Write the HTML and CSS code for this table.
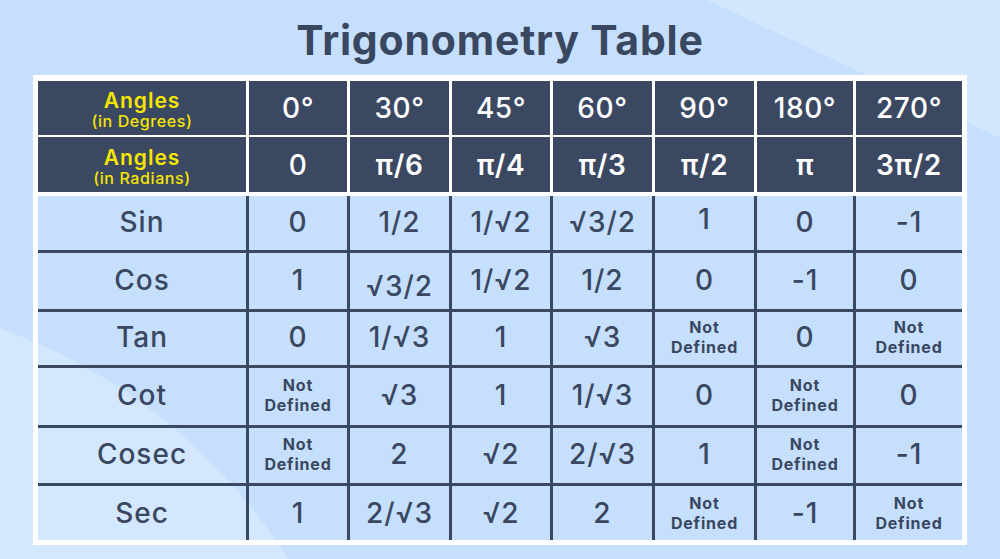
FILE: index.html
```html
<!DOCTYPE html>
<html lang="en">
<head>
<meta charset="utf-8">
<title>Trigonometry Table</title>
<link rel="stylesheet" href="styles.css">
</head>
<body>
<div class="page">
  <h1 class="title">Trigonometry Table</h1>
  <div class="frame">
    <div class="head">
      <div class="hcell label"><span class="big">Angles</span><span class="small">(in Degrees)</span></div>
      <div class="hcell">0°</div>
      <div class="hcell">30°</div>
      <div class="hcell">45°</div>
      <div class="hcell">60°</div>
      <div class="hcell">90°</div>
      <div class="hcell">180°</div>
      <div class="hcell">270°</div>
      <div class="hcell label"><span class="big">Angles</span><span class="small">(in Radians)</span></div>
      <div class="hcell">0</div>
      <div class="hcell pi">π/6</div>
      <div class="hcell pi">π/4</div>
      <div class="hcell pi">π/3</div>
      <div class="hcell pi">π/2</div>
      <div class="hcell pi">π</div>
      <div class="hcell pi">3π/2</div>
    </div>
    <div class="body">
      <div class="cell name">Sin</div>
      <div class="cell">0</div>
      <div class="cell">1/2</div>
      <div class="cell">1/√2</div>
      <div class="cell">√3/2</div>
      <div class="cell up">1</div>
      <div class="cell">0</div>
      <div class="cell">-1</div>

      <div class="cell name">Cos</div>
      <div class="cell">1</div>
      <div class="cell low">√3/2</div>
      <div class="cell">1/√2</div>
      <div class="cell">1/2</div>
      <div class="cell">0</div>
      <div class="cell">-1</div>
      <div class="cell">0</div>

      <div class="cell name">Tan</div>
      <div class="cell">0</div>
      <div class="cell">1/√3</div>
      <div class="cell">1</div>
      <div class="cell">√3</div>
      <div class="cell nd">Not<br>Defined</div>
      <div class="cell">0</div>
      <div class="cell nd">Not<br>Defined</div>

      <div class="cell name">Cot</div>
      <div class="cell nd">Not<br>Defined</div>
      <div class="cell">√3</div>
      <div class="cell">1</div>
      <div class="cell">1/√3</div>
      <div class="cell">0</div>
      <div class="cell nd">Not<br>Defined</div>
      <div class="cell">0</div>

      <div class="cell name">Cosec</div>
      <div class="cell nd">Not<br>Defined</div>
      <div class="cell">2</div>
      <div class="cell">√2</div>
      <div class="cell">2/√3</div>
      <div class="cell">1</div>
      <div class="cell nd">Not<br>Defined</div>
      <div class="cell">-1</div>

      <div class="cell name">Sec</div>
      <div class="cell">1</div>
      <div class="cell">2/√3</div>
      <div class="cell">√2</div>
      <div class="cell">2</div>
      <div class="cell nd">Not<br>Defined</div>
      <div class="cell">-1</div>
      <div class="cell nd">Not<br>Defined</div>
    </div>
  </div>
</div>
</body>
</html>
```
FILE: styles.css
```css
html, body {
  margin: 0;
  padding: 0;
}

body {
  font-family: "Inter", "Noto Sans", sans-serif;
  color: #3a4761;
}

.page {
  width: 1000px;
  height: 559px;
  overflow: hidden;
  display: flex;
  flex-direction: column;
  align-items: center;
  background-color: #c5dffc;
  background-image:
    linear-gradient(25.2deg, rgba(211, 230, 254, 0) 86.6%, #d2e6fe 86.6%),
    radial-gradient(circle 565px at -189px 860px, #d3e7fe 99.7%, rgba(211, 231, 254, 0) 100%);
}

.title {
  margin: 0;
  padding-top: 16px;
  height: 75px;
  box-sizing: border-box;
  font-size: 41px;
  line-height: 48px;
  font-weight: 700;
  color: #3a4761;
  letter-spacing: 0.8px;
}

.frame {
  width: 934px;
  box-sizing: border-box;
  border: 5px solid #ffffff;
  border-top-width: 6px;
}

.head {
  display: grid;
  grid-template-columns: 208px 98px 99px 98px 99px 99px 96px 106px;
  grid-template-rows: 54px 55px;
  column-gap: 3px;
  row-gap: 2px;
  background: #ffffff;
  border-bottom: 4px solid #ffffff;
}

.hcell {
  background: #3b4861;
  color: #ffffff;
  display: flex;
  align-items: center;
  justify-content: center;
  font-size: 28px;
  font-weight: 500;
  letter-spacing: 0.6px;
}

.hcell.pi {
  font-weight: 600;
}

.label {
  flex-direction: column;
  color: #f6e500;
  padding-top: 5px;
  box-sizing: border-box;
  letter-spacing: 0;
}

.label .big {
  font-size: 21px;
  font-weight: 600;
  line-height: 21px;
  letter-spacing: 1px;
}

.label .small {
  font-size: 16px;
  font-weight: 500;
  line-height: 20px;
  letter-spacing: 0.6px;
}

.body {
  display: grid;
  grid-template-columns: 211px 101px 102px 101px 102px 102px 99px 106px;
  grid-template-rows: 57px 59px 56px 60px 58px 54px;
}

.cell {
  display: flex;
  align-items: center;
  justify-content: center;
  text-align: center;
  font-size: 28px;
  font-weight: 500;
  letter-spacing: 1px;
  color: #3a4761;
  border-right: 3px solid #3b4861;
  border-bottom: 3px solid #3b4861;
  padding-bottom: 3px;
}

.cell:nth-child(8n) {
  border-right: none;
}

.cell:nth-last-child(-n+8) {
  border-bottom: none;
  padding-bottom: 0;
}

.cell.low {
  padding-top: 12px;
}

.cell.up {
  padding-bottom: 8px;
}

.cell.nd {
  font-size: 16px;
  font-weight: 700;
  line-height: 20px;
  letter-spacing: 0.8px;
}
```
